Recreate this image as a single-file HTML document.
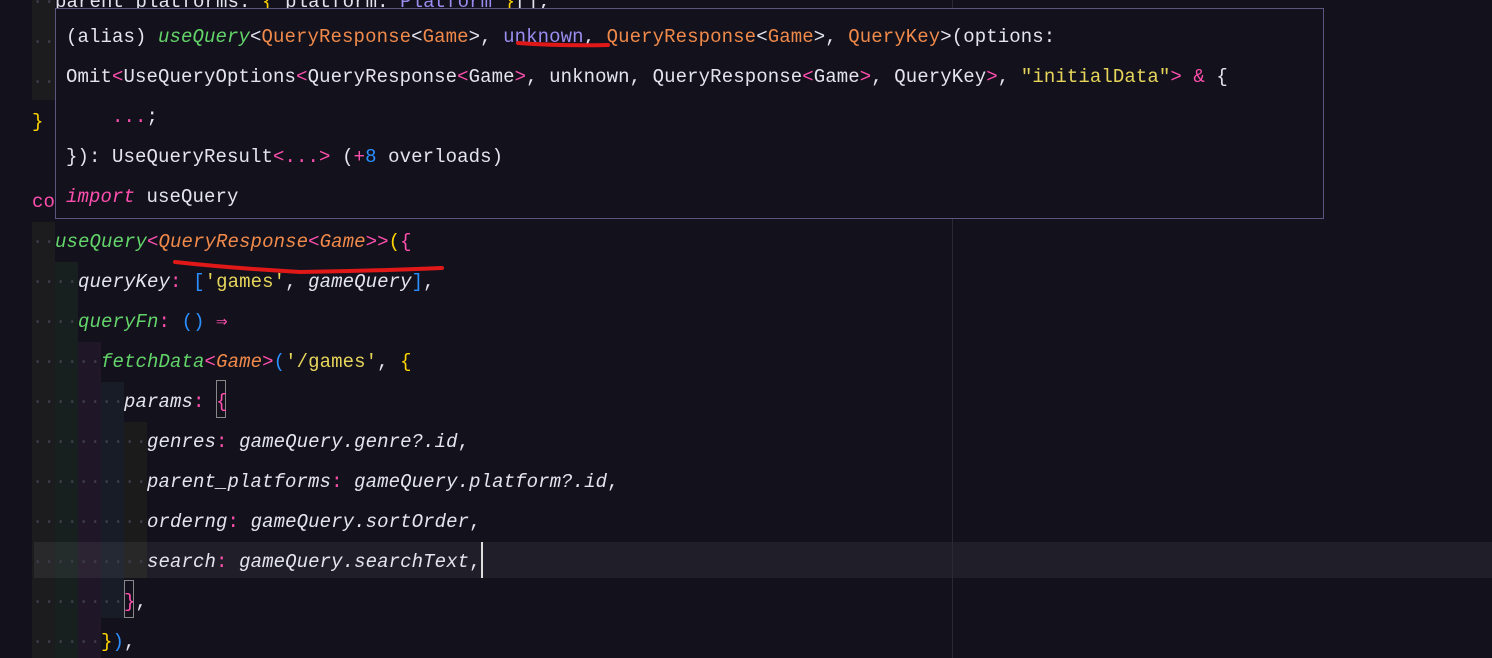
<!DOCTYPE html>
<html><head><meta charset="utf-8"><style>
html,body{margin:0;padding:0;background:#13121c;width:1492px;height:658px;overflow:hidden;position:relative}
.col{position:absolute}
pre{margin:0;font-family:"Liberation Mono","DejaVu Sans Mono",monospace;font-size:19px;line-height:40px;color:#e4e4ee;white-space:pre;letter-spacing:0.1px}
#code{position:absolute;left:32px;top:-18px}
.d{color:#3d3c48}
.g{color:#63d46a;font-style:italic}
.o{color:#f0894a}
.oi{color:#f0894a;font-style:italic}
.p{color:#ff4fae}
.y{color:#ffd400}
.b{color:#2b8fff}
.s{color:#e6d55a}
.i{font-style:italic}
.u{color:#9a8cf0}
#tip{position:absolute;left:55px;top:8px;width:1267px;height:209px;background:#13121c;border:1px solid #5b5680}
#tip pre{position:absolute;left:10px;top:8px}
</style></head><body>
<div class="col" style="left:32px;top:0;width:23px;height:100px;background:#1c1b1d"></div>
<div class="col" style="left:32px;top:222px;width:23px;height:436px;background:#1c1b1d"></div>
<div class="col" style="left:55px;top:262px;width:23px;height:396px;background:#18201f"></div>
<div class="col" style="left:78px;top:342px;width:23px;height:316px;background:#1f1727"></div>
<div class="col" style="left:101px;top:382px;width:23px;height:236px;background:#171c27"></div>
<div class="col" style="left:124px;top:422px;width:23px;height:156px;background:#1c1b1c"></div>
<div class="col" style="left:34px;top:542px;width:1458px;height:36px;background:rgba(255,255,255,0.06)"></div>
<div class="col" style="left:952px;top:0;width:1px;height:658px;background:#2a2936"></div>
<div class="col" style="left:216px;top:380px;width:10px;height:38px;border:1px solid #888;box-sizing:border-box"></div>
<div class="col" style="left:124px;top:580px;width:10px;height:38px;border:1px solid #888;box-sizing:border-box"></div>
<div class="col" style="left:481px;top:542px;width:2px;height:36px;background:#ddd"></div>
<pre id="code"><span class="d">··</span>parent_platforms: <span class="y">{</span> platform: <span class="u">Platform</span> <span class="y">}</span>[];
<span class="d">··</span>
<span class="d">··</span>
<span class="y">}</span>

<span class="p">co</span>nst { data } = 
<span class="d">··</span><span class="g">useQuery</span><span class="p">&lt;</span><span class="oi">QueryResponse</span><span class="p">&lt;</span><span class="oi">Game</span><span class="p">&gt;&gt;</span><span class="y">(</span><span class="p">{</span>
<span class="d">····</span><span class="i">queryKey</span><span class="p">:</span> <span class="b">[</span><span class="s">'games'</span>, <span class="i">gameQuery</span><span class="b">]</span>,
<span class="d">····</span><span class="g">queryFn</span><span class="p">:</span> <span class="b">()</span> <span class="p">⇒</span>
<span class="d">······</span><span class="g">fetchData</span><span class="p">&lt;</span><span class="oi">Game</span><span class="p">&gt;</span><span class="b">(</span><span class="s">'/games'</span>, <span class="y">{</span>
<span class="d">········</span><span class="i">params</span><span class="p">:</span> <span class="p">{</span>
<span class="d">··········</span><span class="i">genres</span><span class="p">:</span> <span class="i">gameQuery.genre?.id</span>,
<span class="d">··········</span><span class="i">parent_platforms</span><span class="p">:</span> <span class="i">gameQuery.platform?.id</span>,
<span class="d">··········</span><span class="i">orderng</span><span class="p">:</span> <span class="i">gameQuery.sortOrder</span>,
<span class="d">··········</span><span class="i">search</span><span class="p">:</span> <span class="i">gameQuery.searchText</span>,
<span class="d">········</span><span class="p">}</span>,
<span class="d">······</span><span class="y">}</span><span class="b">)</span>,
</pre>
<div id="tip"><pre>(alias) <span class="g">useQuery</span>&lt;<span class="o">QueryResponse</span>&lt;<span class="o">Game</span>&gt;, <span class="u">unknown</span>, <span class="o">QueryResponse</span>&lt;<span class="o">Game</span>&gt;, <span class="o">QueryKey</span>&gt;(options:
Omit<span class="p">&lt;</span>UseQueryOptions<span class="p">&lt;</span>QueryResponse<span class="p">&lt;</span>Game<span class="p">&gt;</span>, unknown, QueryResponse<span class="p">&lt;</span>Game<span class="p">&gt;</span>, QueryKey<span class="p">&gt;</span>, <span class="s">"initialData"</span><span class="p">&gt;</span> <span class="p">&amp;</span> {
    <span class="p">...</span>;
}): UseQueryResult<span class="p">&lt;...&gt;</span> (<span class="p">+</span><span class="b">8</span> overloads)
<span class="p i">import</span> useQuery</pre></div>
<svg class="col" style="left:0;top:0" width="1492" height="658">
<path d="M518 43 Q560 46 608 45" stroke="#e01818" stroke-width="4" fill="none" stroke-linecap="round"/>
<path d="M175 262 Q230 268 300 272 Q370 271 442 268" stroke="#e01818" stroke-width="4" fill="none" stroke-linecap="round"/>
</svg>
</body></html>
